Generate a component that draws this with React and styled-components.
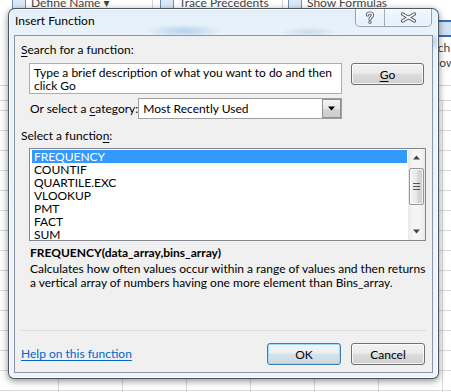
import React from 'react'
import styled, { createGlobalStyle } from 'styled-components'

const GlobalStyle = createGlobalStyle`
  html, body { margin: 0; padding: 0; }
  body {
    font-family: 'Lato', 'Noto Sans', 'DejaVu Sans', sans-serif;
    font-size: 12px;
    color: #000;
  }
`

const Screen = styled.div`
  position: relative;
  width: 451px;
  height: 392px;
  overflow: hidden;
  background: #fff;
  display: flex;
  flex-direction: column;
`

/* ---------- excel window behind the dialog ---------- */

const Ribbon = styled.div`
  height: 85px;
  flex-shrink: 0;
  display: flex;
  padding-left: 12px;
  border-bottom: 1px solid #d4d4d4;
  color: #444;
`

const RibbonGroup = styled.div`
  width: ${p => p.$w}px;
  flex-shrink: 0;
  box-sizing: border-box;
  padding-left: ${p => p.$pad || 0}px;
  border-right: ${p => (p.$sep ? '1px solid #d4d4d4' : 'none')};
  display: flex;
  flex-direction: column;
`

const Cmd = styled.div`
  display: flex;
  align-items: center;
  gap: 5px;
  height: ${p => p.$h || 22}px;
  line-height: ${p => p.$h || 22}px;
  white-space: nowrap;
`

const CmdIcon = styled.span`
  width: 12px;
  height: 10px;
  border: 1px solid #6a8fb8;
  background: #dde9f6;
`

const BigButton = styled.div`
  width: 44px;
  flex-shrink: 0;
  margin-left: 6px;
  padding-top: 20px;
  display: flex;
  flex-direction: column;
  align-items: center;
  text-align: center;
  line-height: 15px;
`

const BigIcon = styled.div`
  width: 16px;
  height: 13px;
  margin-bottom: 3px;
  margin-left: 24px;
  border: 2px solid #2f6fb3;
  border-radius: 3px;
  background: #cfe2f5;
`

const FormulaBar = styled.div`
  height: 14px;
  flex-shrink: 0;
  border-bottom: 1px solid #d4d4d4;
`

const Grid = styled.div`
  flex: 1;
  background-color: #fff;
  background-image:
    linear-gradient(to right, #d9d9d9 1px, transparent 1px),
    linear-gradient(to bottom, #d9d9d9 1px, transparent 1px);
  background-size: 64px 20px;
  background-position: 58px 9px;
`

/* ---------- dialog ---------- */

const Dialog = styled.div`
  position: absolute;
  left: 8px;
  top: 8px;
  width: 431px;
  height: 371px;
  box-sizing: border-box;
  border: 1px solid rgba(40, 48, 58, 0.8);
  border-radius: 7px 7px 6px 6px;
  padding: 0 5px 5px 5px;
  display: flex;
  flex-direction: column;
  background:
    radial-gradient(ellipse 40px 7px at 175px 22px, rgba(120, 170, 220, 0.45), transparent),
    radial-gradient(ellipse 30px 6px at 300px 23px, rgba(150, 180, 210, 0.35), transparent),
    radial-gradient(ellipse 14px 9px at 423px 33px, rgba(110, 160, 215, 0.4), transparent),
    linear-gradient(180deg, #e4eff9 0%, #eaf3fb 8%, #eef4f9 100%);
  box-shadow: 0 2px 7px rgba(0, 0, 0, 0.45), inset 0 0 0 1px rgba(255, 255, 255, 0.75);
`

const TitleBar = styled.div`
  height: 26px;
  display: flex;
  align-items: flex-start;
  flex-shrink: 0;
`

const Title = styled.div`
  margin-top: 4px;
  padding-left: 1px;
  line-height: 16px;
  font-size: 12px;
  color: #000;
  text-shadow: 0 0 6px rgba(255, 255, 255, 0.9);
`

const CaptionGroup = styled.div`
  margin-left: auto;
  margin-right: 1px;
  display: flex;
  height: 17px;
  border: 1px solid rgba(70, 88, 110, 0.55);
  border-top: none;
  border-radius: 0 0 5px 5px;
  overflow: hidden;
  background: linear-gradient(180deg, rgba(255, 255, 255, 0.55), rgba(225, 238, 250, 0.35));
  box-shadow: inset 0 0 0 1px rgba(255, 255, 255, 0.6);
`

const CaptionButton = styled.div`
  width: ${p => p.$w}px;
  display: flex;
  align-items: center;
  justify-content: center;
  border-left: ${p => (p.$divider ? '1px solid rgba(70, 88, 110, 0.45)' : 'none')};
`

const Client = styled.div`
  flex: 1;
  display: flex;
  flex-direction: column;
  background: #f0f0f0;
  border: 1px solid #8a96a3;
`

const Label = styled.div`
  line-height: 16px;
  padding-left: ${p => p.$left || 6}px;
  margin-top: ${p => p.$top || 0}px;
  white-space: nowrap;
  u { text-decoration: underline; text-underline-offset: 2px; }
`

const SearchRow = styled.div`
  display: flex;
  align-items: flex-start;
  gap: 9px;
  margin: 5px 0 0 14px;
`

const SearchBox = styled.div`
  width: 313px;
  height: 31px;
  box-sizing: border-box;
  padding: 2px 4px;
  background: #fff;
  border: 1px solid #abadb3;
  line-height: 13px;
`

const Button = styled.div`
  width: ${p => p.$w || 74}px;
  height: 22px;
  box-sizing: border-box;
  display: flex;
  align-items: center;
  justify-content: center;
  border: 1px solid ${p => (p.$focused ? '#3c7fb1' : '#707070')};
  border-radius: 3px;
  background: ${p =>
    p.$focused
      ? 'linear-gradient(180deg, #f2f6f9 0%, #e9f0f5 45%, #d8e2ea 50%, #ccd8e2 100%)'
      : 'linear-gradient(180deg, #f2f2f2 0%, #ebebeb 45%, #dddddd 50%, #cfcfcf 100%)'};
  box-shadow: inset 0 0 0 1px ${p => (p.$focused ? 'rgba(150, 215, 250, 0.9)' : 'rgba(255, 255, 255, 0.75)')};
  u { text-decoration: underline; text-underline-offset: 2px; }
`

const CategoryRow = styled.div`
  width: 313px;
  margin: 4px 0 0 14px;
  display: flex;
  align-items: center;
  justify-content: space-between;
`

const Combo = styled.div`
  width: 205px;
  height: 21px;
  box-sizing: border-box;
  display: flex;
  align-items: stretch;
  background: #fff;
  border: 1px solid #a0a0a0;
`

const ComboText = styled.div`
  flex: 1;
  padding-left: 4px;
  line-height: 19px;
`

const ComboArrow = styled.div`
  width: 17px;
  display: flex;
  align-items: center;
  justify-content: center;
  border: 1px solid #8f8f8f;
  margin: 0;
  background: linear-gradient(180deg, #f4f4f4 0%, #e6e6e6 50%, #d6d6d6 51%, #cdcdcd 100%);
`

const ListBox = styled.div`
  width: 397px;
  height: 93px;
  box-sizing: border-box;
  margin: 4px 0 0 14px;
  display: flex;
  background: #fff;
  border: 1px solid #828790;
  overflow: hidden;
`

const ListItems = styled.div`
  flex: 1;
  padding: 1px 1px 0 2px;
`

const ListItem = styled.div`
  height: 13px;
  line-height: 13px;
  padding-left: 2px;
  background: ${p => (p.$selected ? '#3399ff' : 'transparent')};
  color: ${p => (p.$selected ? '#fff' : '#000')};
`

const ScrollBar = styled.div`
  width: 17px;
  display: flex;
  flex-direction: column;
  background: linear-gradient(90deg, #e9e9e9 0%, #f5f5f5 30%, #f5f5f5 70%, #e9e9e9 100%);
`

const ScrollArrow = styled.div`
  height: 17px;
  display: flex;
  align-items: center;
  justify-content: center;
`

const ScrollTrack = styled.div`
  flex: 1;
  padding: 2px 1px 0 1px;
`

const Thumb = styled.div`
  height: 37px;
  box-sizing: border-box;
  border: 1px solid #979797;
  border-radius: 2px;
  display: flex;
  flex-direction: column;
  align-items: center;
  justify-content: center;
  gap: 2px;
  background: linear-gradient(90deg, #f3f3f3 0%, #e8e8e8 50%, #d9d9d9 51%, #cfcfcf 100%);
  box-shadow: inset 0 0 0 1px rgba(255, 255, 255, 0.7);
`

const Grip = styled.span`
  width: 7px;
  height: 1px;
  background: #555;
`

const Signature = styled.div`
  margin-top: 4px;
  padding-left: 15px;
  line-height: 16px;
  font-weight: bold;
`

const Description = styled.div`
  margin-top: 1px;
  padding-left: 15px;
  line-height: 14px;
  white-space: nowrap;
`

const Spacer = styled.div`
  flex: 1;
`

const Separator = styled.div`
  height: 1px;
  width: 405px;
  margin-left: 6px;
  background: #d5dfe5;
`

const Footer = styled.div`
  display: flex;
  align-items: center;
  margin-top: 12px;
  padding: 0 7px 7px 6px;
  gap: 10px;
`

const HelpLink = styled.a`
  margin-right: auto;
  color: #0066cc;
  text-decoration: underline;
  text-underline-offset: 2px;
  line-height: 16px;
`

const functions = ['FREQUENCY', 'COUNTIF', 'QUARTILE.EXC', 'VLOOKUP', 'PMT', 'FACT', 'SUM']

const GlassGlyph = ({ children, w, h }) => (
  <svg width={w} height={h} viewBox={`0 0 ${w} ${h}`} fill="none" strokeLinecap="round">
    <g stroke="#4a5460" strokeWidth="3.2">{children}</g>
    <g stroke="#fff" strokeWidth="1.5">{children}</g>
  </svg>
)

const Triangle = ({ up, size = 7, color = '#000' }) => (
  <svg width={size} height={Math.ceil(size / 2) + 1} viewBox="0 0 7 4">
    <path d={up ? 'M0 4 L3.5 0 L7 4 Z' : 'M0 0 L7 0 L3.5 4 Z'} fill={color} />
  </svg>
)

export default function App() {
  return (
    <>
      <GlobalStyle />
      <Screen>
        <Ribbon>
          <RibbonGroup $w={141} $sep>
            <Cmd $h={6}><CmdIcon />Define Name ▾</Cmd>
          </RibbonGroup>
          <RibbonGroup $w={130} $pad={7} $sep>
            <Cmd $h={6}><CmdIcon />Trace Precedents</Cmd>
            <Cmd><CmdIcon />Trace Dependents</Cmd>
          </RibbonGroup>
          <RibbonGroup $w={122} $pad={5}>
            <Cmd $h={6}><CmdIcon />Show Formulas</Cmd>
            <Cmd><CmdIcon />Error Checking</Cmd>
          </RibbonGroup>
          <BigButton>
            <BigIcon />
            <span>Watch</span>
            <span>Window</span>
          </BigButton>
        </Ribbon>
        <FormulaBar />
        <Grid />

        <Dialog>
          <TitleBar>
            <Title>Insert Function</Title>
            <CaptionGroup>
              <CaptionButton $w={28}>
                <GlassGlyph w={10} h={13}>
                  <path d="M2.5 4 C2.5 1.5 7.5 1.2 7.5 4 C7.5 6 5 6 5 8.2" />
                  <path d="M5 11 L5 11.2" />
                </GlassGlyph>
              </CaptionButton>
              <CaptionButton $w={46} $divider>
                <GlassGlyph w={17} h={11}>
                  <path d="M2.5 2 L14.5 9" />
                  <path d="M2.5 9 L14.5 2" />
                </GlassGlyph>
              </CaptionButton>
            </CaptionGroup>
          </TitleBar>

          <Client>
            <Label $top={6}><u>S</u>earch for a function:</Label>
            <SearchRow>
              <SearchBox>Type a brief description of what you want to do and then click Go</SearchBox>
              <Button $w={73}><span><u>G</u>o</span></Button>
            </SearchRow>

            <CategoryRow>
              <Label $left={1}>Or select a <u>c</u>ategory:</Label>
              <Combo>
                <ComboText>Most Recently Used</ComboText>
                <ComboArrow><Triangle /></ComboArrow>
              </Combo>
            </CategoryRow>

            <Label $top={9}>Select a functio<u>n</u>:</Label>
            <ListBox>
              <ListItems>
                {functions.map((f, i) => (
                  <ListItem key={f} $selected={i === 0}>{f}</ListItem>
                ))}
              </ListItems>
              <ScrollBar>
                <ScrollArrow><Triangle up color="#444" /></ScrollArrow>
                <ScrollTrack>
                  <Thumb>
                    <Grip /><Grip /><Grip />
                  </Thumb>
                </ScrollTrack>
                <ScrollArrow><Triangle color="#444" /></ScrollArrow>
              </ScrollBar>
            </ListBox>

            <Signature>FREQUENCY(data_array,bins_array)</Signature>
            <Description>
              Calculates how often values occur within a range of values and then returns
              <br />
              a vertical array of numbers having one more element than Bins_array.
            </Description>

            <Spacer />
            <Separator />
            <Footer>
              <HelpLink href="#">Help on this function</HelpLink>
              <Button $w={74} $focused>OK</Button>
              <Button $w={74}>Cancel</Button>
            </Footer>
          </Client>
        </Dialog>
      </Screen>
    </>
  )
}
